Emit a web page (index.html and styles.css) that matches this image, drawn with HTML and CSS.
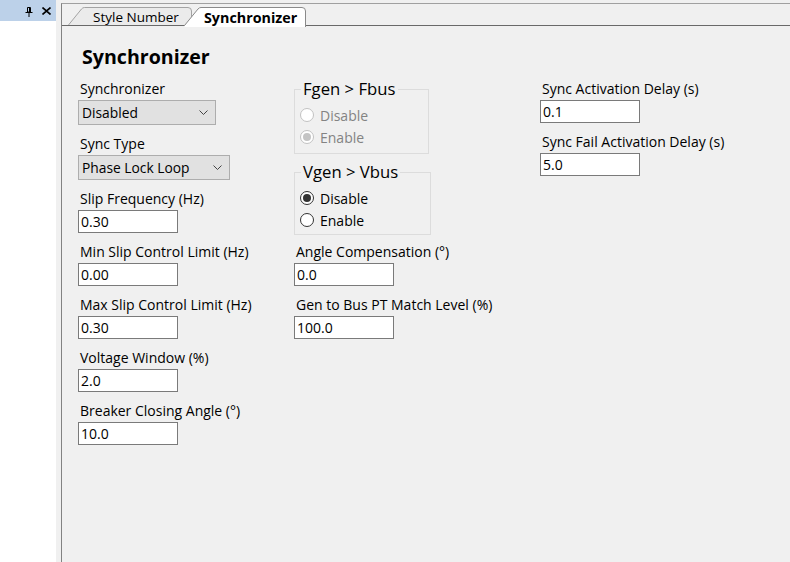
FILE: index.html
```html
<!DOCTYPE html>
<html>
<head>
<meta charset="utf-8">
<link rel="stylesheet" href="styles.css">
</head>
<body>
<div class="app">
  <aside class="dock">
    <div class="dock-head">
      <svg class="pin" width="8" height="10" viewBox="0 0 8 10"><path d="M2.5 0.5h3v4.5h-3z M4.5 0.5v4.5 M0.5 5.5h7 M4 5.5v4.5" fill="none" stroke="#000" stroke-width="1"/></svg>
      <svg class="close" width="9" height="8" viewBox="0 0 9 8"><path d="M0.5 0.5L8.5 7.5M8.5 0.5L0.5 7.5" stroke="#000" stroke-width="1.6" fill="none"/></svg>
    </div>
  </aside>
  <div class="gutter"></div>
  <main class="doc">
    <div class="tabs">
      <div class="tab">
        <svg class="tab-bg" width="124" height="18" viewBox="0 0 124 18"><path d="M0.5 18 L13.5 2 Q14.7 0.5 16.5 0.5 L120 0.5 Q123.5 0.5 123.5 4 L123.5 18" fill="#ebebeb" stroke="#a3a3a3"/></svg>
        <span class="tab-text">Style Number</span>
      </div>
      <div class="tab active">
        <svg class="tab-bg" width="122" height="20" viewBox="0 0 122 20"><path d="M0.5 18.5 L14 2 Q15.2 0.5 17 0.5 L118 0.5 Q121.5 0.5 121.5 4 L121.5 20 L0.5 20 Z" fill="#fff" stroke="none"/><path d="M0.5 18.5 L14 2 Q15.2 0.5 17 0.5 L118 0.5 Q121.5 0.5 121.5 4 L121.5 20" fill="none" stroke="#8a8a8a"/></svg>
        <span class="tab-text">Synchronizer</span>
      </div>
    </div>
    <section class="page">
      <h1 class="title">Synchronizer</h1>
      <div class="grid">
        <div class="col">
          <div class="field">
            <label>Synchronizer</label>
            <div class="select w138"><span>Disabled</span><svg width="9" height="5" viewBox="0 0 9 5"><path d="M0.5 0.5L4.5 4.5L8.5 0.5" fill="none" stroke="#444"/></svg></div>
          </div>
          <div class="field">
            <label>Sync Type</label>
            <div class="select w152"><span>Phase Lock Loop</span><svg width="9" height="5" viewBox="0 0 9 5"><path d="M0.5 0.5L4.5 4.5L8.5 0.5" fill="none" stroke="#444"/></svg></div>
          </div>
          <div class="field">
            <label>Slip Frequency (Hz)</label>
            <input class="input" type="text" value="0.30" readonly>
          </div>
          <div class="field">
            <label>Min Slip Control Limit (Hz)</label>
            <input class="input" type="text" value="0.00" readonly>
          </div>
          <div class="field">
            <label>Max Slip Control Limit (Hz)</label>
            <input class="input" type="text" value="0.30" readonly>
          </div>
          <div class="field">
            <label>Voltage Window (%)</label>
            <input class="input" type="text" value="2.0" readonly>
          </div>
          <div class="field">
            <label>Breaker Closing Angle (°)</label>
            <input class="input" type="text" value="10.0" readonly>
          </div>
        </div>
        <div class="col">
          <fieldset class="group g1">
            <legend>Fgen &gt; Fbus</legend>
            <div class="radio-row disabled"><span class="radio"></span><span>Disable</span></div>
            <div class="radio-row disabled"><span class="radio on"></span><span>Enable</span></div>
          </fieldset>
          <fieldset class="group g2">
            <legend>Vgen &gt; Vbus</legend>
            <div class="radio-row"><span class="radio on"></span><span>Disable</span></div>
            <div class="radio-row"><span class="radio"></span><span>Enable</span></div>
          </fieldset>
          <div class="field">
            <label>Angle Compensation (°)</label>
            <input class="input" type="text" value="0.0" readonly>
          </div>
          <div class="field">
            <label>Gen to Bus PT Match Level (%)</label>
            <input class="input" type="text" value="100.0" readonly>
          </div>
        </div>
        <div class="col">
          <div class="field">
            <label>Sync Activation Delay (s)</label>
            <input class="input" type="text" value="0.1" readonly>
          </div>
          <div class="field">
            <label>Sync Fail Activation Delay (s)</label>
            <input class="input" type="text" value="5.0" readonly>
          </div>
        </div>
      </div>
    </section>
  </main>
</div>
</body>
</html>
```
FILE: styles.css
```css
html, body {
  margin: 0;
  padding: 0;
}
body {
  font-family: "Open Sans", "Liberation Sans", sans-serif;
  font-size: 14px;
  color: #000;
  background: #f0f0f0;
}
.app {
  display: flex;
  width: 790px;
  height: 562px;
  overflow: hidden;
}
.dock {
  width: 56px;
  flex: none;
  background: #fff;
}
.dock-head {
  height: 21px;
  background: #bcd1e9;
  display: flex;
  align-items: center;
  justify-content: flex-end;
  gap: 9px;
  padding-right: 5px;
}
.dock-head .pin {
  margin-top: 2px;
}
.gutter {
  width: 5px;
  flex: none;
}
.doc {
  flex: 1;
  margin-top: 3px;
  border-top: 1px solid #a0a0a0;
  border-left: 1px solid #828282;
  display: flex;
  flex-direction: column;
}
.tabs {
  height: 21px;
  border-bottom: 1px solid #696969;
  display: flex;
  align-items: flex-end;
  padding-left: 6px;
}
.tab {
  position: relative;
  width: 124px;
  height: 18px;
  flex: none;
}
.tab-bg {
  position: absolute;
  left: 0;
  top: 0;
}
.tab-text {
  position: relative;
  display: block;
  padding-left: 25px;
  line-height: 21px;
  font-size: 13.5px;
  color: #000;
}
.tab.active {
  width: 122px;
  height: 20px;
  margin-left: -8px;
  margin-bottom: -2px;
  z-index: 1;
}
.tab.active .tab-text {
  padding-left: 20px;
  font-weight: 700;
  font-size: 14.3px;
  line-height: 22px;
}
.page {
  padding: 19px 0 0 16px;
}
.title {
  margin: 0 0 10px;
  padding-left: 4px;
  font-size: 19.6px;
  font-weight: 700;
  line-height: 24px;
}
.grid {
  display: grid;
  grid-template-columns: 216px 246px 1fr;
  align-items: start;
}
.col {
  display: flex;
  flex-direction: column;
  align-items: flex-start;
}
.field {
  display: flex;
  flex-direction: column;
  align-items: flex-start;
  margin-bottom: 9px;
}
.field label {
  line-height: 19px;
  margin-bottom: 2px;
  padding-left: 2px;
  white-space: nowrap;
}
.input {
  width: 100px;
  height: 23px;
  box-sizing: border-box;
  margin: 0;
  border: 1px solid #7a7a7a;
  background: #fff;
  font-family: "Open Sans", "Liberation Sans", sans-serif;
  font-size: 14px;
  color: #000;
  padding: 0 2px;
  outline: none;
}
.select {
  height: 25px;
  box-sizing: border-box;
  border: 1px solid #adadad;
  background: #e1e1e1;
  display: flex;
  align-items: center;
  justify-content: space-between;
  padding: 0 7px 0 3px;
  font-size: 13.8px;
}
.w138 { width: 138px; }
.w152 { width: 152px; }
.group {
  margin: 0 0 8px;
  padding: 5px 0 5px 5px;
  border: 1px solid #dcdcdc;
  box-sizing: border-box;
  min-width: 0;
}
.g1 { width: 135px; }
.g2 { width: 137px; padding-top: 5px; padding-bottom: 3px; margin-bottom: 7px; }
.group legend {
  font-size: 16.7px;
  line-height: 20px;
  padding: 0 2px;
  margin-left: 1px;
}
.radio-row {
  display: flex;
  align-items: center;
  height: 22px;
  gap: 6px;
}
.radio {
  width: 14px;
  height: 14px;
  box-sizing: border-box;
  border-radius: 50%;
  border: 1px solid #333;
  background: #fff;
  display: flex;
  align-items: center;
  justify-content: center;
}
.radio.on::after {
  content: "";
  width: 8px;
  height: 8px;
  border-radius: 50%;
  background: #333;
}
.radio-row.disabled {
  color: #838383;
}
.radio-row.disabled .radio {
  border-color: #c2c2c2;
}
.radio-row.disabled .radio.on::after {
  background: #c4c4c4;
}
```
